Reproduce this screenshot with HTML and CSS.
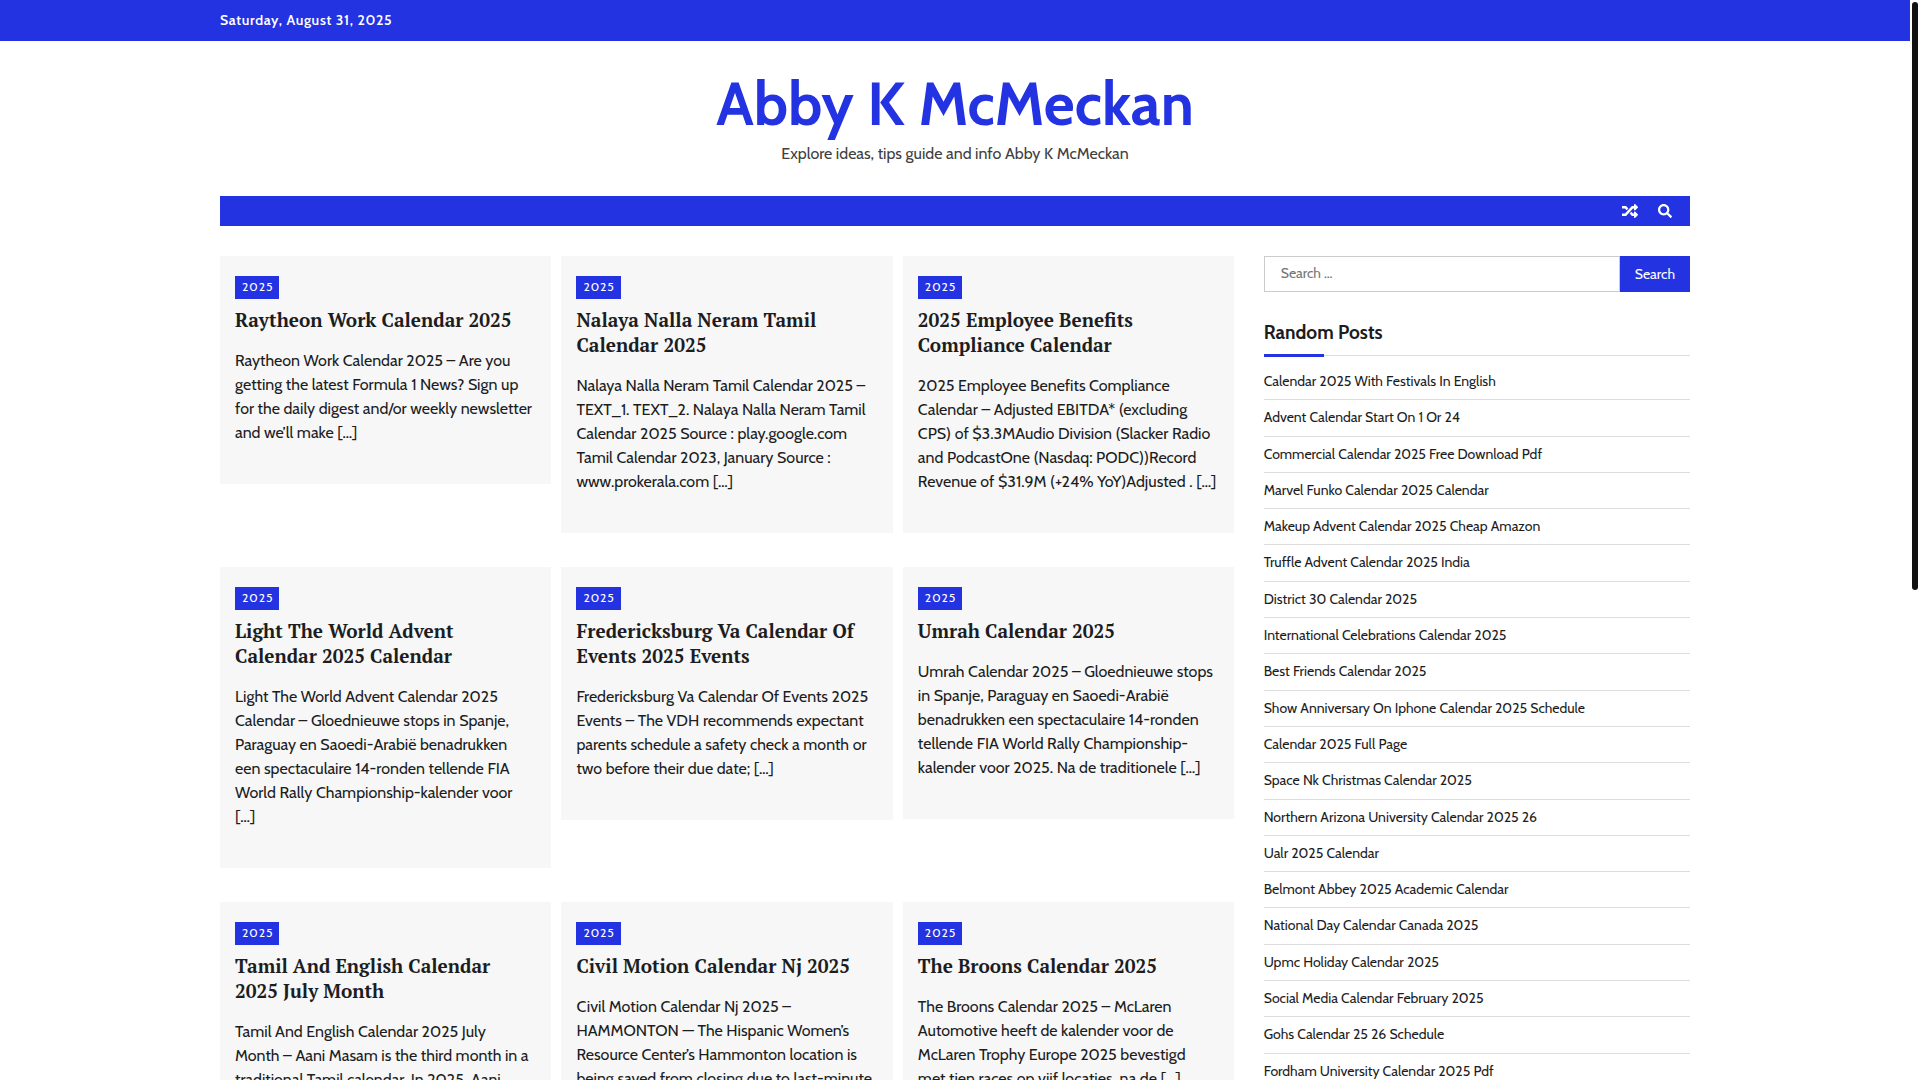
FILE: index.html
```
<!DOCTYPE html>
<html lang="en">
<head>
  <meta charset="UTF-8">
  <meta name="viewport" content="width=device-width, initial-scale=1.0">
  <title>Abby K McMeckan</title>
  <link rel="stylesheet" href="styles.css">
</head>
<body>
  <div class="top-bar">
    <div class="container">
      <span class="top-date">Saturday, August 31, 2025</span>
    </div>
  </div>

  <header class="site-header">
    <h1 class="site-title"><a href="#">Abby K McMeckan</a></h1>
    <p class="site-description">Explore ideas, tips guide and info Abby K McMeckan</p>
  </header>

  <div class="container">
    <nav class="main-nav">
      <a href="#" class="nav-icon" aria-label="Random post">
        <svg width="16" height="16" viewBox="0 0 512 512" fill="currentColor"><path d="M504.971 359.029c9.373 9.373 9.373 24.569 0 33.941l-80 79.984c-15.01 15.01-40.971 4.49-40.971-16.971V416h-58.785a12.004 12.004 0 0 1-8.773-3.812l-70.556-75.596 53.333-57.143L352 336h32v-39.981c0-21.438 25.943-31.998 40.971-16.971l80 79.981zM12 176h84l52.781 56.551 53.333-57.143-70.556-75.596A11.999 11.999 0 0 0 122.785 96H12c-6.627 0-12 5.373-12 12v56c0 6.627 5.373 12 12 12zm372 0v39.984c0 21.46 25.961 31.98 40.971 16.971l80-79.984c9.373-9.373 9.373-24.569 0-33.941l-80-79.981C409.943 24.021 384 34.582 384 56.019V96h-58.785a12.004 12.004 0 0 0-8.773 3.812L96 336H12c-6.627 0-12 5.373-12 12v56c0 6.627 5.373 12 12 12h110.785c3.326 0 6.503-1.381 8.773-3.812L352 176h32z"/></svg>
      </a>
      <a href="#" class="nav-icon" aria-label="Search">
        <svg width="14" height="14" viewBox="0 0 512 512" fill="currentColor"><path d="M505 442.700L405.300 343c-4.500-4.500-10.600-7-17-7H372c27.600-35.300 44-79.700 44-128C416 93.100 322.900 0 208 0S0 93.100 0 208s93.100 208 208 208c48.300 0 92.700-16.400 128-44v16.300c0 6.400 2.500 12.500 7 17l99.700 99.700c9.400 9.400 24.600 9.400 33.900 0l28.300-28.300c9.400-9.400 9.400-24.600.1-34zM208 336c-70.700 0-128-57.200-128-128 0-70.700 57.200-128 128-128 70.700 0 128 57.200 128 128 0 70.700-57.200 128-128 128z"/></svg>
      </a>
    </nav>

    <div class="content-area">
      <main class="posts">
        <article class="post">
          <a href="#" class="category">2025</a>
          <h2><a href="#">Raytheon Work Calendar 2025</a></h2>
          <p>Raytheon Work Calendar 2025 – Are you getting the latest Formula 1 News? Sign up for the daily digest and/or weekly newsletter and we’ll make […]</p>
        </article>
        <article class="post">
          <a href="#" class="category">2025</a>
          <h2><a href="#">Nalaya Nalla Neram Tamil Calendar 2025</a></h2>
          <p>Nalaya Nalla Neram Tamil Calendar 2025 – TEXT_1. TEXT_2. Nalaya Nalla Neram Tamil Calendar 2025 Source : play.google.com Tamil Calendar 2023, January Source : www.prokerala.com […]</p>
        </article>
        <article class="post">
          <a href="#" class="category">2025</a>
          <h2><a href="#">2025 Employee Benefits Compliance Calendar</a></h2>
          <p>2025 Employee Benefits Compliance Calendar – Adjusted EBITDA* (excluding CPS) of $3.3MAudio Division (Slacker Radio and PodcastOne (Nasdaq: PODC))Record Revenue of $31.9M (+24% YoY)Adjusted . […]</p>
        </article>
        <article class="post">
          <a href="#" class="category">2025</a>
          <h2><a href="#">Light The World Advent Calendar 2025 Calendar</a></h2>
          <p>Light The World Advent Calendar 2025 Calendar – Gloednieuwe stops in Spanje, Paraguay en Saoedi-Arabië benadrukken<br>een spectaculaire 14-ronden tellende FIA<br>World Rally Championship-kalender voor<br>[…]</p>
        </article>
        <article class="post">
          <a href="#" class="category">2025</a>
          <h2><a href="#">Fredericksburg Va Calendar Of Events 2025 Events</a></h2>
          <p>Fredericksburg Va Calendar Of Events 2025 Events – The VDH recommends expectant parents schedule a safety check a month or two before their due date; […]</p>
        </article>
        <article class="post">
          <a href="#" class="category">2025</a>
          <h2><a href="#">Umrah Calendar 2025</a></h2>
          <p>Umrah Calendar 2025 – Gloednieuwe stops in Spanje, Paraguay en Saoedi-Arabië benadrukken een spectaculaire 14-ronden tellende FIA World Rally Championship-kalender voor 2025. Na de traditionele […]</p>
        </article>
        <article class="post">
          <a href="#" class="category">2025</a>
          <h2><a href="#">Tamil And English Calendar 2025 July Month</a></h2>
          <p>Tamil And English Calendar 2025 July<br>Month – Aani Masam is the third month in a traditional Tamil calendar. In 2025, Aani<br>[…]</p>
        </article>
        <article class="post">
          <a href="#" class="category">2025</a>
          <h2><a href="#">Civil Motion Calendar Nj 2025</a></h2>
          <p>Civil Motion Calendar Nj 2025 – HAMMONTON — The Hispanic Women’s Resource Center’s Hammonton location is being saved from closing due to last-minute […]</p>
        </article>
        <article class="post">
          <a href="#" class="category">2025</a>
          <h2><a href="#">The Broons Calendar 2025</a></h2>
          <p>The Broons Calendar 2025 – McLaren Automotive heeft de kalender voor de McLaren Trophy Europe 2025 bevestigd<br>met tien races op vijf locaties, na de […]</p>
        </article>
      </main>

      <aside class="sidebar">
        <form class="search-form">
          <input type="search" class="search-field" placeholder="Search …" aria-label="Search for:">
          <button type="submit" class="search-submit">Search</button>
        </form>

        <h2 class="widget-title">Random Posts</h2>
        <ul class="random-posts">
          <li><a href="#">Calendar 2025 With Festivals In English</a></li>
          <li><a href="#">Advent Calendar Start On 1 Or 24</a></li>
          <li><a href="#">Commercial Calendar 2025 Free Download Pdf</a></li>
          <li><a href="#">Marvel Funko Calendar 2025 Calendar</a></li>
          <li><a href="#">Makeup Advent Calendar 2025 Cheap Amazon</a></li>
          <li><a href="#">Truffle Advent Calendar 2025 India</a></li>
          <li><a href="#">District 30 Calendar 2025</a></li>
          <li><a href="#">International Celebrations Calendar 2025</a></li>
          <li><a href="#">Best Friends Calendar 2025</a></li>
          <li><a href="#">Show Anniversary On Iphone Calendar 2025 Schedule</a></li>
          <li><a href="#">Calendar 2025 Full Page</a></li>
          <li><a href="#">Space Nk Christmas Calendar 2025</a></li>
          <li><a href="#">Northern Arizona University Calendar 2025 26</a></li>
          <li><a href="#">Ualr 2025 Calendar</a></li>
          <li><a href="#">Belmont Abbey 2025 Academic Calendar</a></li>
          <li><a href="#">National Day Calendar Canada 2025</a></li>
          <li><a href="#">Upmc Holiday Calendar 2025</a></li>
          <li><a href="#">Social Media Calendar February 2025</a></li>
          <li><a href="#">Gohs Calendar 25 26 Schedule</a></li>
          <li><a href="#">Fordham University Calendar 2025 Pdf</a></li>
        </ul>
      </aside>
    </div>
  </div>

  <div class="scroll-thumb"></div>
</body>
</html>
```
FILE: styles.css
```
* { box-sizing: border-box; }

body {
  margin: 0;
  padding-right: 10px;
  font-family: Cabin, Lato, sans-serif;
  font-size: 16px;
  line-height: 24px;
  color: #1c1d1f;
  background: #fff;
}

a {
  color: inherit;
  text-decoration: none;
}

h1, h2, p, ul {
  margin: 0;
  padding: 0;
}

.container {
  max-width: 1470px;
  margin: 0 auto;
}

/* header */
.top-bar {
  background: #2333e1;
  color: #fff;
  padding: 8px 0 9px;
}

.top-date {
  display: block;
  font-size: 14px;
  font-weight: 600;
  letter-spacing: 0.05em;
}

.site-header {
  text-align: center;
  padding: 28px 0 30px;
}

.site-title {
  margin-bottom: 2px;
  font-size: 60px;
  font-weight: 700;
  line-height: 70px;
  color: #2333e1;
}

.site-description {
  color: #404040;
  line-height: 25px;
}

.main-nav {
  display: flex;
  justify-content: flex-end;
  align-items: center;
  gap: 20px;
  height: 30px;
  padding: 0 18px;
  background: #2333e1;
}

.nav-icon {
  display: flex;
  color: #fff;
}

/* posts */
.content-area {
  display: grid;
  grid-template-columns: 69% 29%;
  justify-content: space-between;
  align-items: start;
  padding-top: 30px;
}

.posts {
  display: grid;
  grid-template-columns: repeat(3, 1fr);
  align-items: start;
  gap: 34px 10px;
}

.post {
  background: #f7f7f7;
  padding: 20px 15px 39px;
}

.category {
  display: block;
  width: fit-content;
  padding: 0 6px 1px 7px;
  background: #2333e1;
  color: #fff;
  font-size: 12px;
  line-height: 22px;
  letter-spacing: 1px;
}

.post h2 {
  margin: 8px 0 17px;
  font-family: "PT Serif", "Liberation Serif", serif;
  font-size: 19px;
  font-weight: 700;
  line-height: 25px;
}

/* sidebar */
.search-form {
  display: flex;
}

.search-field {
  flex: 1;
  height: 36px;
  padding: 0 16px 2px;
  border: 1px solid #ccc;
  font-family: inherit;
  font-size: 14px;
  color: #666;
}

.search-submit {
  height: 36px;
  padding: 0 15px;
  border: 0;
  background: #2333e1;
  color: #fff;
  font-family: inherit;
  font-size: 14px;
}

.widget-title {
  position: relative;
  margin: 29px 0 8px;
  padding-bottom: 10px;
  border-bottom: 1px solid #ddd;
  font-size: 19px;
  font-weight: 700;
  line-height: 24px;
}

.widget-title::after {
  content: '';
  position: absolute;
  left: 0;
  bottom: -2px;
  width: 60px;
  height: 3px;
  background: #2333e1;
}

.random-posts {
  list-style: none;
}

.random-posts li {
  padding: 7px 0 8px;
  border-bottom: 1px solid #ddd;
  font-size: 14px;
  line-height: 1.45;
}

/* page scroll indicator */
.scroll-thumb {
  position: fixed;
  top: 2px;
  right: 2px;
  width: 6px;
  height: 588px;
  border-radius: 3px;
  background: #111;
}
```
